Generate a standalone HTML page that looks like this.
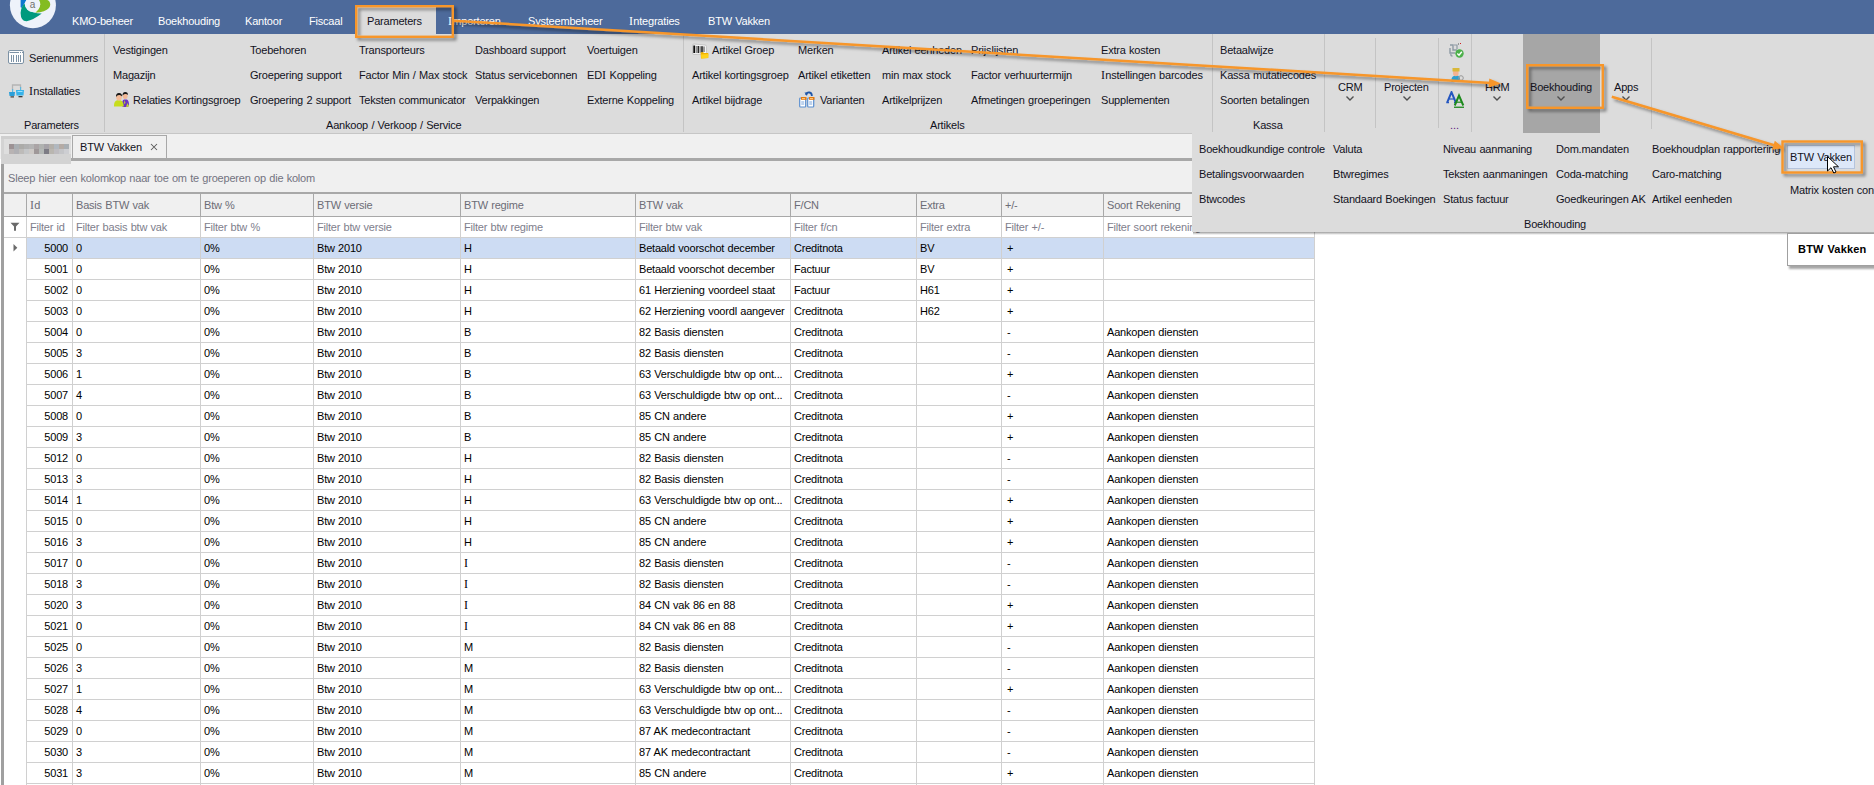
<!DOCTYPE html><html><head><meta charset="utf-8"><style>
*{margin:0;padding:0;box-sizing:border-box}
html,body{width:1874px;height:785px;overflow:hidden;background:#fff;font-family:"Liberation Sans", sans-serif;}
.t{position:absolute;font-size:11px;line-height:13px;white-space:nowrap;color:#12121c;letter-spacing:-0.2px;word-spacing:0.5px}
.w{color:#fff}
.g{color:#6c6c76}
.f{color:#7e7e8c}
.d{color:#000}
.si{font-family:"Liberation Serif",serif;font-size:12px;line-height:0;letter-spacing:0.3px}
</style></head><body><div style="position:absolute;left:0px;top:0px;width:1874px;height:34px;background:#4d6a9b"></div>
<svg style="position:absolute;left:0;top:0" width="60" height="34" viewBox="0 0 60 34">
<circle cx="32.9" cy="5.2" r="23" fill="#eef2fa"/>
<path d="M20.6 -1 L27 -1 L22 7.8 Q20.8 8 20.6 7 Z" fill="#0d78cf"/>
<path d="M24.5 3.5 Q21 7 20.6 13 Q20.8 21.5 26.7 21.2 Q33 20 41.8 13.4 Q33 13.5 28 10 Q24.8 7.5 24.5 3.5 Z" fill="#009a7e"/>
<path d="M36 -2 Q45 -2 49 1 Q51.5 4.5 49 8 Q45.5 12 35.3 12.8 Q39.5 9 39.8 4.5 Q39.5 0.5 36 -2 Z" fill="#83bc21"/>
<circle cx="32.7" cy="4.3" r="7.6" fill="#eef2fa"/>
<text x="29.8" y="8.2" font-family="Liberation Sans" font-size="10" fill="#707070">a</text>
</svg>
<div class="t w" style="left:72px;top:15px;">KMO-beheer</div>
<div class="t w" style="left:158px;top:15px;">Boekhouding</div>
<div class="t w" style="left:245px;top:15px;">Kantoor</div>
<div class="t w" style="left:309px;top:15px;">Fiscaal</div>
<div class="t w" style="left:448px;top:15px;"><span class="si">I</span>mporteren</div>
<div class="t w" style="left:528px;top:15px;">Systeembeheer</div>
<div class="t w" style="left:629px;top:15px;"><span class="si">I</span>ntegraties</div>
<div class="t w" style="left:708px;top:15px;">BTW Vakken</div>
<div style="position:absolute;left:357px;top:7px;width:79px;height:27px;background:#dcdcdc"></div>
<div class="t " style="left:367px;top:15px;">Parameters</div>
<div style="position:absolute;left:0px;top:34px;width:1874px;height:100px;background:#dcdcdc"></div>
<div style="position:absolute;left:0px;top:133px;width:1192px;height:1px;background:#c6c6c6"></div>
<div style="position:absolute;left:104px;top:34px;width:1px;height:98px;background:#c4c4c4"></div>
<div style="position:absolute;left:683px;top:34px;width:1px;height:98px;background:#c4c4c4"></div>
<div style="position:absolute;left:1212px;top:34px;width:1px;height:98px;background:#c4c4c4"></div>
<div style="position:absolute;left:1324px;top:34px;width:1px;height:98px;background:#c4c4c4"></div>
<div style="position:absolute;left:1375px;top:38px;width:1px;height:90px;background:#c4c4c4"></div>
<div style="position:absolute;left:1438px;top:38px;width:1px;height:90px;background:#c4c4c4"></div>
<div style="position:absolute;left:1471px;top:34px;width:1px;height:98px;background:#c4c4c4"></div>
<div style="position:absolute;left:1651px;top:38px;width:1px;height:91px;background:#c4c4c4"></div>
<div class="t " style="left:29px;top:52px;">Serienummers</div>
<div class="t " style="left:29px;top:85px;"><span class="si">I</span>nstallaties</div>
<div class="t " style="left:24px;top:119px;">Parameters</div>
<div class="t " style="left:113px;top:44px;">Vestigingen</div>
<div class="t " style="left:113px;top:69px;">Magazijn</div>
<div class="t " style="left:250px;top:44px;">Toebehoren</div>
<div class="t " style="left:250px;top:69px;">Groepering support</div>
<div class="t " style="left:250px;top:94px;">Groepering 2 support</div>
<div class="t " style="left:359px;top:44px;">Transporteurs</div>
<div class="t " style="left:359px;top:69px;">Factor Min / Max stock</div>
<div class="t " style="left:359px;top:94px;">Teksten communicator</div>
<div class="t " style="left:475px;top:44px;">Dashboard support</div>
<div class="t " style="left:475px;top:69px;">Status servicebonnen</div>
<div class="t " style="left:475px;top:94px;">Verpakkingen</div>
<div class="t " style="left:587px;top:44px;">Voertuigen</div>
<div class="t " style="left:587px;top:69px;">ED<span class="si">I</span> Koppeling</div>
<div class="t " style="left:587px;top:94px;">Externe Koppeling</div>
<div class="t " style="left:692px;top:69px;">Artikel kortingsgroep</div>
<div class="t " style="left:692px;top:94px;">Artikel bijdrage</div>
<div class="t " style="left:798px;top:44px;">Merken</div>
<div class="t " style="left:798px;top:69px;">Artikel etiketten</div>
<div class="t " style="left:882px;top:44px;">Artikel eenheden</div>
<div class="t " style="left:882px;top:69px;">min max stock</div>
<div class="t " style="left:882px;top:94px;">Artikelprijzen</div>
<div class="t " style="left:971px;top:44px;">Prijslijsten</div>
<div class="t " style="left:971px;top:69px;">Factor verhuurtermijn</div>
<div class="t " style="left:971px;top:94px;">Afmetingen groeperingen</div>
<div class="t " style="left:1101px;top:44px;">Extra kosten</div>
<div class="t " style="left:1101px;top:69px;"><span class="si">I</span>nstellingen barcodes</div>
<div class="t " style="left:1101px;top:94px;">Supplementen</div>
<div class="t " style="left:1220px;top:44px;">Betaalwijze</div>
<div class="t " style="left:1220px;top:69px;">Kassa mutatiecodes</div>
<div class="t " style="left:1220px;top:94px;">Soorten betalingen</div>
<div class="t " style="left:133px;top:94px;">Relaties Kortingsgroep</div>
<div class="t " style="left:712px;top:44px;">Artikel Groep</div>
<div class="t " style="left:820px;top:94px;">Varianten</div>
<div class="t " style="left:326px;top:119px;">Aankoop / Verkoop / Service</div>
<div class="t " style="left:930px;top:119px;">Artikels</div>
<div class="t " style="left:1253px;top:119px;">Kassa</div>
<div style="position:absolute;left:1523px;top:34px;width:77px;height:99px;background:#a6a6a6"></div>
<div class="t " style="left:1338px;top:81px;">CRM</div>
<div class="t " style="left:1384px;top:81px;">Projecten</div>
<div class="t " style="left:1485px;top:81px;">HRM</div>
<div class="t " style="left:1530px;top:81px;">Boekhouding</div>
<div class="t " style="left:1614px;top:81px;">Apps</div>
<svg style="position:absolute;left:1345px;top:95px" width="10" height="7"><path d="M1.5 1.5 L5 5 L8.5 1.5" stroke="#505050" stroke-width="1.4" fill="none"/></svg>
<svg style="position:absolute;left:1402px;top:95px" width="10" height="7"><path d="M1.5 1.5 L5 5 L8.5 1.5" stroke="#505050" stroke-width="1.4" fill="none"/></svg>
<svg style="position:absolute;left:1492px;top:95px" width="10" height="7"><path d="M1.5 1.5 L5 5 L8.5 1.5" stroke="#505050" stroke-width="1.4" fill="none"/></svg>
<svg style="position:absolute;left:1556px;top:95px" width="10" height="7"><path d="M1.5 1.5 L5 5 L8.5 1.5" stroke="#505050" stroke-width="1.4" fill="none"/></svg>
<svg style="position:absolute;left:1621px;top:95px" width="10" height="7"><path d="M1.5 1.5 L5 5 L8.5 1.5" stroke="#505050" stroke-width="1.4" fill="none"/></svg>
<svg style="position:absolute;left:8px;top:50px" width="17" height="15" viewBox="0 0 17 15">
<rect x="0.5" y="0.5" width="15" height="13" rx="1.5" fill="#fdfdfd" stroke="#7d92a5"/>
<line x1="1.5" y1="2.5" x2="11" y2="2.5" stroke="#7d92a5" stroke-width="1"/>
<rect x="12" y="2" width="1" height="1" fill="#7d92a5"/><rect x="14" y="2" width="1" height="1" fill="#7d92a5"/>
<rect x="3" y="5" width="1" height="7" fill="#7d92a5"/><rect x="5" y="5" width="1" height="7" fill="#7d92a5"/>
<rect x="8" y="5" width="1" height="7" fill="#7d92a5"/><rect x="10" y="5" width="1" height="7" fill="#7d92a5"/><rect x="12" y="5" width="1" height="7" fill="#7d92a5"/>
</svg>
<svg style="position:absolute;left:9px;top:84px" width="15" height="14" viewBox="0 0 15 14">
<path d="M3.5 6 V1 H11.5 V4" stroke="#b4b4b4" stroke-width="1.3" fill="none"/>
<rect x="11" y="3" width="1.2" height="3" fill="#5ab8e0"/><rect x="3" y="5" width="1.2" height="3" fill="#5ab8e0"/>
<path d="M0 8 H6 L5.5 12 H0.5 Z" fill="#2b9fd9"/>
<path d="M7 6 H15 L14.5 11.5 H7.5 Z" fill="#37b3ea"/>
<rect x="8.5" y="7" width="5" height="1" fill="#9ee0fa"/>
<rect x="1.5" y="12.3" width="3.5" height="1.2" fill="#3a3a3a"/><rect x="9.5" y="12" width="4" height="1.3" fill="#3a3a3a"/>
</svg>
<svg style="position:absolute;left:113px;top:91px" width="17" height="17" viewBox="0 0 17 17">
<path d="M9 15 Q8.5 9.5 11 8.5 L14 8.5 Q16 9.5 16 14 L15 16 L10 16 Z" fill="#6b33c4"/>
<path d="M11.5 9 L12.5 12 L11 13 Z" fill="#c8de24"/><path d="M14.5 12 L16 15.5 L13 16 Z" fill="#c8de24"/>
<path d="M1 15.5 Q0.8 10 4 9.3 L7.5 9.3 Q10.5 10 10.8 15.5 Z" fill="#c7dd1c"/>
<ellipse cx="12.2" cy="5" rx="2.4" ry="3" fill="#f3b996"/>
<path d="M9.5 4.8 Q9.3 1.2 12.2 1 Q15 1 15 4 Q14 2.8 12 3 Q10.5 3 9.5 4.8 Z" fill="#1a1a1a"/>
<ellipse cx="6" cy="6.2" rx="2.8" ry="3.2" fill="#f5bc98"/>
<path d="M3 6 Q2.8 2 6 2 Q9.2 2 9.1 5.5 Q8 3.8 6 4 Q4 4 3 6 Z" fill="#151515"/>
</svg>
<svg style="position:absolute;left:692px;top:43px" width="17" height="16" viewBox="0 0 17 16">
<path d="M0.5 2.5 Q0.5 1 2 1 L13 2 Q14.5 2.2 14.5 3.5 L14.5 9.5 Q14.5 11 13 11 L2 11.5 Q0.5 11.5 0.5 10 Z" fill="#f4f4f4" stroke="#bdbdbd" stroke-width="0.8"/>
<rect x="1.3" y="2.5" width="1.8" height="7.5" fill="#0a0a0a"/><rect x="3.8" y="3" width="0.9" height="7" fill="#666"/>
<rect x="5.5" y="3" width="1.6" height="7" fill="#2a2a2a"/><rect x="7.7" y="3.2" width="0.9" height="6.6" fill="#555"/>
<rect x="9.2" y="3.2" width="1.6" height="6.4" fill="#222"/><rect x="11.5" y="3.5" width="1" height="5.5" fill="#444"/>
<path d="M8.6 9.5 L11 9 L12 10 L16.3 10 L16.3 15 L9 15.5 Z" fill="#f2b200"/>
<path d="M9 11.5 L16.5 11 L16 15 L9.3 15.5 Z" fill="#ffd21c"/>
</svg>
<svg style="position:absolute;left:799px;top:91px" width="17" height="17" viewBox="0 0 17 17">
<path d="M7 4 Q8 1 10.5 1.5 Q13 2 12.8 5" stroke="#1f56a8" stroke-width="1.8" fill="none"/>
<path d="M5.5 1.5 L8.5 1.5 L8 5 Z" fill="#1f56a8"/>
<rect x="0.7" y="7" width="6" height="9" rx="0.8" fill="#fff" stroke="#5a8fd0" stroke-width="1.2"/>
<rect x="8.7" y="7" width="6" height="9" rx="0.8" fill="#fff" stroke="#5a8fd0" stroke-width="1.2"/>
<rect x="2" y="6" width="5.5" height="2.8" fill="#e57a10"/><rect x="10" y="6" width="5.5" height="2.8" fill="#e57a10"/>
<rect x="3" y="7" width="3" height="0.9" fill="#ffd080"/><rect x="11" y="7" width="3" height="0.9" fill="#ffd080"/>
<rect x="2.2" y="10.5" width="3" height="1" fill="#7aa6dc"/><rect x="2.2" y="12.5" width="3" height="1" fill="#7aa6dc"/>
<rect x="10.2" y="10.5" width="3" height="1" fill="#7aa6dc"/><rect x="10.2" y="12.5" width="3" height="1" fill="#7aa6dc"/>
</svg>
<svg style="position:absolute;left:1448px;top:42px" width="17" height="17" viewBox="0 0 17 17">
<path d="M2 3 H5 V8 H9 M2 6 V11 H7 M3 12 Q2.5 14 4.5 14" stroke="#8d9aa4" stroke-width="1.4" fill="none"/>
<path d="M6 3 H9 V7" stroke="#8d9aa4" stroke-width="1.2" fill="none"/>
<rect x="12" y="1" width="1" height="1" fill="#d02020"/><rect x="10" y="1.5" width="1" height="1" fill="#555"/>
<circle cx="11.5" cy="11.5" r="4.2" fill="#4cb04a"/>
<path d="M9.3 11.6 L11 13.2 L13.8 9.8" stroke="#fff" stroke-width="1.4" fill="none"/>
</svg>
<svg style="position:absolute;left:1450px;top:67px" width="15" height="16" viewBox="0 0 15 16">
<path d="M1.5 12 Q2 9 5 8.5 L8 8.5 Q10 9.5 10 12 L10 15 L1.5 15 Z" fill="#2ba0d0"/>
<ellipse cx="5.8" cy="6" rx="2.8" ry="3.2" fill="#f4b391"/>
<path d="M2.5 1 H9.5 V4.5 H2.5 Z" fill="#d9b83a"/>
<circle cx="11" cy="11" r="2.3" fill="none" stroke="#999" stroke-width="1"/>
</svg>
<svg style="position:absolute;left:1446px;top:91px" width="19" height="18" viewBox="0 0 19 18">
<path d="M1.2 11.5 L5.5 1.2 L9.8 11.5" stroke="#2456c0" stroke-width="2" fill="none" stroke-linejoin="miter"/>
<path d="M3.2 8 H7.8" stroke="#2456c0" stroke-width="1.2"/>
<path d="M0.3 11.6 H3 M8 11.6 H10.7" stroke="#2456c0" stroke-width="1.1"/>
<path d="M8.7 14.5 L13 4.6 L17.3 14.5" stroke="#1d8a1d" stroke-width="2" fill="none"/>
<path d="M10.7 11.2 H15.3" stroke="#1d8a1d" stroke-width="1.2"/>
<rect x="8" y="15.6" width="10" height="1.3" fill="#1d8a1d"/>
</svg>
<div class="t " style="left:1450px;top:119px;color:#602080;letter-spacing:0">...</div>
<div style="position:absolute;left:0px;top:134px;width:1874px;height:25px;background:#f0f0f0"></div>
<div style="position:absolute;left:72px;top:135px;width:95px;height:25px;background:#f0f0f0;border:1px solid #a8a8a8;border-bottom:none"></div>
<div class="t " style="left:80px;top:141px;">BTW Vakken</div>
<svg style="position:absolute;left:150px;top:143px" width="8" height="8"><path d="M1 1 L7 7 M7 1 L1 7" stroke="#5a5a5a" stroke-width="1.05"/></svg>
<div style="position:absolute;left:71px;top:158px;width:1803px;height:3px;background:#a8a8a8"></div>
<div style="position:absolute;left:1px;top:159px;width:3px;height:626px;background:#a0a0a0"></div>
<div style="position:absolute;left:4px;top:161px;width:1870px;height:32px;background:#f0f0f0"></div>
<div style="position:absolute;left:4px;top:192px;width:1870px;height:2px;background:#a8a8a8"></div>
<div style="position:absolute;left:1px;top:136px;width:70px;height:28px;background:#d3d3d3"></div>
<div style="position:absolute;left:1px;top:136px;width:70px;height:3px;background:#cfcfcf"></div>
<div style="position:absolute;left:4px;top:139px;width:67px;height:15px;background:#dedede"></div>
<div style="position:absolute;left:9px;top:144px;width:5px;height:5px;background:#9c9294"></div>
<div style="position:absolute;left:9px;top:149px;width:5px;height:5px;background:#b8b3b3"></div>
<div style="position:absolute;left:14px;top:144px;width:5px;height:5px;background:#a9aeb2"></div>
<div style="position:absolute;left:14px;top:149px;width:5px;height:5px;background:#b0b0b4"></div>
<div style="position:absolute;left:19px;top:144px;width:5px;height:5px;background:#acaba8"></div>
<div style="position:absolute;left:19px;top:149px;width:5px;height:5px;background:#bdbbb9"></div>
<div style="position:absolute;left:24px;top:144px;width:5px;height:5px;background:#b0b0b0"></div>
<div style="position:absolute;left:24px;top:149px;width:5px;height:5px;background:#c4c6c8"></div>
<div style="position:absolute;left:29px;top:144px;width:5px;height:5px;background:#b4b4b4"></div>
<div style="position:absolute;left:29px;top:149px;width:5px;height:5px;background:#cdc9c6"></div>
<div style="position:absolute;left:34px;top:144px;width:5px;height:5px;background:#aba5a6"></div>
<div style="position:absolute;left:34px;top:149px;width:5px;height:5px;background:#9f9899"></div>
<div style="position:absolute;left:39px;top:144px;width:5px;height:5px;background:#b0b2b0"></div>
<div style="position:absolute;left:39px;top:149px;width:5px;height:5px;background:#b4b8b6"></div>
<div style="position:absolute;left:44px;top:144px;width:5px;height:5px;background:#a6a3a8"></div>
<div style="position:absolute;left:44px;top:149px;width:5px;height:5px;background:#7d7c85"></div>
<div style="position:absolute;left:49px;top:144px;width:5px;height:5px;background:#b3afa9"></div>
<div style="position:absolute;left:49px;top:149px;width:5px;height:5px;background:#b9b6b0"></div>
<div style="position:absolute;left:54px;top:144px;width:5px;height:5px;background:#b1b8bf"></div>
<div style="position:absolute;left:54px;top:149px;width:5px;height:5px;background:#bebcc0"></div>
<div style="position:absolute;left:59px;top:144px;width:5px;height:5px;background:#b4aba5"></div>
<div style="position:absolute;left:59px;top:149px;width:5px;height:5px;background:#c4c5c8"></div>
<div style="position:absolute;left:64px;top:144px;width:5px;height:5px;background:#a8aeb3"></div>
<div style="position:absolute;left:64px;top:149px;width:5px;height:5px;background:#cdced2"></div>
<div class="t " style="left:8px;top:172px;color:#737380">Sleep hier een kolomkop naar toe om te groeperen op die kolom</div>
<div style="position:absolute;left:4px;top:194px;width:1310px;height:23px;background:#f0f0f0"></div>
<div style="position:absolute;left:4px;top:216px;width:1310px;height:1px;background:#a8a8a8"></div>
<div style="position:absolute;left:4px;top:237px;width:1310px;height:1px;background:#d0d0d0"></div>
<svg style="position:absolute;left:10px;top:222px" width="11" height="10"><path d="M0.5 0.8 H9.5 L6 4.6 V8.8 H4 V4.6 Z" fill="#6a6a6a"/></svg>
<svg style="position:absolute;left:13px;top:243px" width="5" height="10"><path d="M0.5 1 L4.3 4.8 L0.5 8.6 Z" fill="#6a6a6a"/></svg>
<div class="t g" style="left:30px;top:199px;"><span class="si">I</span>d</div>
<div class="t f" style="left:30px;top:221px;">Filter id</div>
<div class="t g" style="left:76px;top:199px;">Basis BTW vak</div>
<div class="t f" style="left:76px;top:221px;">Filter basis btw vak</div>
<div class="t g" style="left:204px;top:199px;">Btw %</div>
<div class="t f" style="left:204px;top:221px;">Filter btw %</div>
<div class="t g" style="left:317px;top:199px;">BTW versie</div>
<div class="t f" style="left:317px;top:221px;">Filter btw versie</div>
<div class="t g" style="left:464px;top:199px;">BTW regime</div>
<div class="t f" style="left:464px;top:221px;">Filter btw regime</div>
<div class="t g" style="left:639px;top:199px;">BTW vak</div>
<div class="t f" style="left:639px;top:221px;">Filter btw vak</div>
<div class="t g" style="left:794px;top:199px;">F/CN</div>
<div class="t f" style="left:794px;top:221px;">Filter f/cn</div>
<div class="t g" style="left:920px;top:199px;">Extra</div>
<div class="t f" style="left:920px;top:221px;">Filter extra</div>
<div class="t g" style="left:1005px;top:199px;">+/-</div>
<div class="t f" style="left:1005px;top:221px;">Filter +/-</div>
<div class="t g" style="left:1107px;top:199px;">Soort Rekening</div>
<div class="t f" style="left:1107px;top:221px;">Filter soort rekening</div>
<div style="position:absolute;left:27px;top:238px;width:1287px;height:20px;background:#cddcf3"></div>
<div style="position:absolute;left:26px;top:258px;width:1288px;height:1px;background:#d0d0d0"></div>
<div class="t d" style="left:26px;width:42px;text-align:right;top:242px">5000</div>
<div class="t d" style="left:76px;top:242px;">0</div>
<div class="t d" style="left:204px;top:242px;">0%</div>
<div class="t d" style="left:317px;top:242px;">Btw 2010</div>
<div class="t d" style="left:464px;top:242px;">H</div>
<div class="t d" style="left:639px;top:242px;">Betaald voorschot december</div>
<div class="t d" style="left:794px;top:242px;">Creditnota</div>
<div class="t d" style="left:920px;top:242px;">BV</div>
<div class="t d" style="left:1007px;top:242px;">+</div>
<div style="position:absolute;left:26px;top:279px;width:1288px;height:1px;background:#d0d0d0"></div>
<div class="t d" style="left:26px;width:42px;text-align:right;top:263px">5001</div>
<div class="t d" style="left:76px;top:263px;">0</div>
<div class="t d" style="left:204px;top:263px;">0%</div>
<div class="t d" style="left:317px;top:263px;">Btw 2010</div>
<div class="t d" style="left:464px;top:263px;">H</div>
<div class="t d" style="left:639px;top:263px;">Betaald voorschot december</div>
<div class="t d" style="left:794px;top:263px;">Factuur</div>
<div class="t d" style="left:920px;top:263px;">BV</div>
<div class="t d" style="left:1007px;top:263px;">+</div>
<div style="position:absolute;left:26px;top:300px;width:1288px;height:1px;background:#d0d0d0"></div>
<div class="t d" style="left:26px;width:42px;text-align:right;top:284px">5002</div>
<div class="t d" style="left:76px;top:284px;">0</div>
<div class="t d" style="left:204px;top:284px;">0%</div>
<div class="t d" style="left:317px;top:284px;">Btw 2010</div>
<div class="t d" style="left:464px;top:284px;">H</div>
<div class="t d" style="left:639px;top:284px;">61 Herziening voordeel staat</div>
<div class="t d" style="left:794px;top:284px;">Factuur</div>
<div class="t d" style="left:920px;top:284px;">H61</div>
<div class="t d" style="left:1007px;top:284px;">+</div>
<div style="position:absolute;left:26px;top:321px;width:1288px;height:1px;background:#d0d0d0"></div>
<div class="t d" style="left:26px;width:42px;text-align:right;top:305px">5003</div>
<div class="t d" style="left:76px;top:305px;">0</div>
<div class="t d" style="left:204px;top:305px;">0%</div>
<div class="t d" style="left:317px;top:305px;">Btw 2010</div>
<div class="t d" style="left:464px;top:305px;">H</div>
<div class="t d" style="left:639px;top:305px;">62 Herziening voordl aangever</div>
<div class="t d" style="left:794px;top:305px;">Creditnota</div>
<div class="t d" style="left:920px;top:305px;">H62</div>
<div class="t d" style="left:1007px;top:305px;">+</div>
<div style="position:absolute;left:26px;top:342px;width:1288px;height:1px;background:#d0d0d0"></div>
<div class="t d" style="left:26px;width:42px;text-align:right;top:326px">5004</div>
<div class="t d" style="left:76px;top:326px;">0</div>
<div class="t d" style="left:204px;top:326px;">0%</div>
<div class="t d" style="left:317px;top:326px;">Btw 2010</div>
<div class="t d" style="left:464px;top:326px;">B</div>
<div class="t d" style="left:639px;top:326px;">82 Basis diensten</div>
<div class="t d" style="left:794px;top:326px;">Creditnota</div>
<div class="t d" style="left:1007px;top:326px;">-</div>
<div class="t d" style="left:1107px;top:326px;">Aankopen diensten</div>
<div style="position:absolute;left:26px;top:363px;width:1288px;height:1px;background:#d0d0d0"></div>
<div class="t d" style="left:26px;width:42px;text-align:right;top:347px">5005</div>
<div class="t d" style="left:76px;top:347px;">3</div>
<div class="t d" style="left:204px;top:347px;">0%</div>
<div class="t d" style="left:317px;top:347px;">Btw 2010</div>
<div class="t d" style="left:464px;top:347px;">B</div>
<div class="t d" style="left:639px;top:347px;">82 Basis diensten</div>
<div class="t d" style="left:794px;top:347px;">Creditnota</div>
<div class="t d" style="left:1007px;top:347px;">-</div>
<div class="t d" style="left:1107px;top:347px;">Aankopen diensten</div>
<div style="position:absolute;left:26px;top:384px;width:1288px;height:1px;background:#d0d0d0"></div>
<div class="t d" style="left:26px;width:42px;text-align:right;top:368px">5006</div>
<div class="t d" style="left:76px;top:368px;">1</div>
<div class="t d" style="left:204px;top:368px;">0%</div>
<div class="t d" style="left:317px;top:368px;">Btw 2010</div>
<div class="t d" style="left:464px;top:368px;">B</div>
<div class="t d" style="left:639px;top:368px;">63 Verschuldigde btw op ont...</div>
<div class="t d" style="left:794px;top:368px;">Creditnota</div>
<div class="t d" style="left:1007px;top:368px;">+</div>
<div class="t d" style="left:1107px;top:368px;">Aankopen diensten</div>
<div style="position:absolute;left:26px;top:405px;width:1288px;height:1px;background:#d0d0d0"></div>
<div class="t d" style="left:26px;width:42px;text-align:right;top:389px">5007</div>
<div class="t d" style="left:76px;top:389px;">4</div>
<div class="t d" style="left:204px;top:389px;">0%</div>
<div class="t d" style="left:317px;top:389px;">Btw 2010</div>
<div class="t d" style="left:464px;top:389px;">B</div>
<div class="t d" style="left:639px;top:389px;">63 Verschuldigde btw op ont...</div>
<div class="t d" style="left:794px;top:389px;">Creditnota</div>
<div class="t d" style="left:1007px;top:389px;">-</div>
<div class="t d" style="left:1107px;top:389px;">Aankopen diensten</div>
<div style="position:absolute;left:26px;top:426px;width:1288px;height:1px;background:#d0d0d0"></div>
<div class="t d" style="left:26px;width:42px;text-align:right;top:410px">5008</div>
<div class="t d" style="left:76px;top:410px;">0</div>
<div class="t d" style="left:204px;top:410px;">0%</div>
<div class="t d" style="left:317px;top:410px;">Btw 2010</div>
<div class="t d" style="left:464px;top:410px;">B</div>
<div class="t d" style="left:639px;top:410px;">85 CN andere</div>
<div class="t d" style="left:794px;top:410px;">Creditnota</div>
<div class="t d" style="left:1007px;top:410px;">+</div>
<div class="t d" style="left:1107px;top:410px;">Aankopen diensten</div>
<div style="position:absolute;left:26px;top:447px;width:1288px;height:1px;background:#d0d0d0"></div>
<div class="t d" style="left:26px;width:42px;text-align:right;top:431px">5009</div>
<div class="t d" style="left:76px;top:431px;">3</div>
<div class="t d" style="left:204px;top:431px;">0%</div>
<div class="t d" style="left:317px;top:431px;">Btw 2010</div>
<div class="t d" style="left:464px;top:431px;">B</div>
<div class="t d" style="left:639px;top:431px;">85 CN andere</div>
<div class="t d" style="left:794px;top:431px;">Creditnota</div>
<div class="t d" style="left:1007px;top:431px;">+</div>
<div class="t d" style="left:1107px;top:431px;">Aankopen diensten</div>
<div style="position:absolute;left:26px;top:468px;width:1288px;height:1px;background:#d0d0d0"></div>
<div class="t d" style="left:26px;width:42px;text-align:right;top:452px">5012</div>
<div class="t d" style="left:76px;top:452px;">0</div>
<div class="t d" style="left:204px;top:452px;">0%</div>
<div class="t d" style="left:317px;top:452px;">Btw 2010</div>
<div class="t d" style="left:464px;top:452px;">H</div>
<div class="t d" style="left:639px;top:452px;">82 Basis diensten</div>
<div class="t d" style="left:794px;top:452px;">Creditnota</div>
<div class="t d" style="left:1007px;top:452px;">-</div>
<div class="t d" style="left:1107px;top:452px;">Aankopen diensten</div>
<div style="position:absolute;left:26px;top:489px;width:1288px;height:1px;background:#d0d0d0"></div>
<div class="t d" style="left:26px;width:42px;text-align:right;top:473px">5013</div>
<div class="t d" style="left:76px;top:473px;">3</div>
<div class="t d" style="left:204px;top:473px;">0%</div>
<div class="t d" style="left:317px;top:473px;">Btw 2010</div>
<div class="t d" style="left:464px;top:473px;">H</div>
<div class="t d" style="left:639px;top:473px;">82 Basis diensten</div>
<div class="t d" style="left:794px;top:473px;">Creditnota</div>
<div class="t d" style="left:1007px;top:473px;">-</div>
<div class="t d" style="left:1107px;top:473px;">Aankopen diensten</div>
<div style="position:absolute;left:26px;top:510px;width:1288px;height:1px;background:#d0d0d0"></div>
<div class="t d" style="left:26px;width:42px;text-align:right;top:494px">5014</div>
<div class="t d" style="left:76px;top:494px;">1</div>
<div class="t d" style="left:204px;top:494px;">0%</div>
<div class="t d" style="left:317px;top:494px;">Btw 2010</div>
<div class="t d" style="left:464px;top:494px;">H</div>
<div class="t d" style="left:639px;top:494px;">63 Verschuldigde btw op ont...</div>
<div class="t d" style="left:794px;top:494px;">Creditnota</div>
<div class="t d" style="left:1007px;top:494px;">+</div>
<div class="t d" style="left:1107px;top:494px;">Aankopen diensten</div>
<div style="position:absolute;left:26px;top:531px;width:1288px;height:1px;background:#d0d0d0"></div>
<div class="t d" style="left:26px;width:42px;text-align:right;top:515px">5015</div>
<div class="t d" style="left:76px;top:515px;">0</div>
<div class="t d" style="left:204px;top:515px;">0%</div>
<div class="t d" style="left:317px;top:515px;">Btw 2010</div>
<div class="t d" style="left:464px;top:515px;">H</div>
<div class="t d" style="left:639px;top:515px;">85 CN andere</div>
<div class="t d" style="left:794px;top:515px;">Creditnota</div>
<div class="t d" style="left:1007px;top:515px;">+</div>
<div class="t d" style="left:1107px;top:515px;">Aankopen diensten</div>
<div style="position:absolute;left:26px;top:552px;width:1288px;height:1px;background:#d0d0d0"></div>
<div class="t d" style="left:26px;width:42px;text-align:right;top:536px">5016</div>
<div class="t d" style="left:76px;top:536px;">3</div>
<div class="t d" style="left:204px;top:536px;">0%</div>
<div class="t d" style="left:317px;top:536px;">Btw 2010</div>
<div class="t d" style="left:464px;top:536px;">H</div>
<div class="t d" style="left:639px;top:536px;">85 CN andere</div>
<div class="t d" style="left:794px;top:536px;">Creditnota</div>
<div class="t d" style="left:1007px;top:536px;">+</div>
<div class="t d" style="left:1107px;top:536px;">Aankopen diensten</div>
<div style="position:absolute;left:26px;top:573px;width:1288px;height:1px;background:#d0d0d0"></div>
<div class="t d" style="left:26px;width:42px;text-align:right;top:557px">5017</div>
<div class="t d" style="left:76px;top:557px;">0</div>
<div class="t d" style="left:204px;top:557px;">0%</div>
<div class="t d" style="left:317px;top:557px;">Btw 2010</div>
<div class="t d" style="left:464px;top:557px;"><span class="si">I</span></div>
<div class="t d" style="left:639px;top:557px;">82 Basis diensten</div>
<div class="t d" style="left:794px;top:557px;">Creditnota</div>
<div class="t d" style="left:1007px;top:557px;">-</div>
<div class="t d" style="left:1107px;top:557px;">Aankopen diensten</div>
<div style="position:absolute;left:26px;top:594px;width:1288px;height:1px;background:#d0d0d0"></div>
<div class="t d" style="left:26px;width:42px;text-align:right;top:578px">5018</div>
<div class="t d" style="left:76px;top:578px;">3</div>
<div class="t d" style="left:204px;top:578px;">0%</div>
<div class="t d" style="left:317px;top:578px;">Btw 2010</div>
<div class="t d" style="left:464px;top:578px;"><span class="si">I</span></div>
<div class="t d" style="left:639px;top:578px;">82 Basis diensten</div>
<div class="t d" style="left:794px;top:578px;">Creditnota</div>
<div class="t d" style="left:1007px;top:578px;">-</div>
<div class="t d" style="left:1107px;top:578px;">Aankopen diensten</div>
<div style="position:absolute;left:26px;top:615px;width:1288px;height:1px;background:#d0d0d0"></div>
<div class="t d" style="left:26px;width:42px;text-align:right;top:599px">5020</div>
<div class="t d" style="left:76px;top:599px;">3</div>
<div class="t d" style="left:204px;top:599px;">0%</div>
<div class="t d" style="left:317px;top:599px;">Btw 2010</div>
<div class="t d" style="left:464px;top:599px;"><span class="si">I</span></div>
<div class="t d" style="left:639px;top:599px;">84 CN vak 86 en 88</div>
<div class="t d" style="left:794px;top:599px;">Creditnota</div>
<div class="t d" style="left:1007px;top:599px;">+</div>
<div class="t d" style="left:1107px;top:599px;">Aankopen diensten</div>
<div style="position:absolute;left:26px;top:636px;width:1288px;height:1px;background:#d0d0d0"></div>
<div class="t d" style="left:26px;width:42px;text-align:right;top:620px">5021</div>
<div class="t d" style="left:76px;top:620px;">0</div>
<div class="t d" style="left:204px;top:620px;">0%</div>
<div class="t d" style="left:317px;top:620px;">Btw 2010</div>
<div class="t d" style="left:464px;top:620px;"><span class="si">I</span></div>
<div class="t d" style="left:639px;top:620px;">84 CN vak 86 en 88</div>
<div class="t d" style="left:794px;top:620px;">Creditnota</div>
<div class="t d" style="left:1007px;top:620px;">+</div>
<div class="t d" style="left:1107px;top:620px;">Aankopen diensten</div>
<div style="position:absolute;left:26px;top:657px;width:1288px;height:1px;background:#d0d0d0"></div>
<div class="t d" style="left:26px;width:42px;text-align:right;top:641px">5025</div>
<div class="t d" style="left:76px;top:641px;">0</div>
<div class="t d" style="left:204px;top:641px;">0%</div>
<div class="t d" style="left:317px;top:641px;">Btw 2010</div>
<div class="t d" style="left:464px;top:641px;">M</div>
<div class="t d" style="left:639px;top:641px;">82 Basis diensten</div>
<div class="t d" style="left:794px;top:641px;">Creditnota</div>
<div class="t d" style="left:1007px;top:641px;">-</div>
<div class="t d" style="left:1107px;top:641px;">Aankopen diensten</div>
<div style="position:absolute;left:26px;top:678px;width:1288px;height:1px;background:#d0d0d0"></div>
<div class="t d" style="left:26px;width:42px;text-align:right;top:662px">5026</div>
<div class="t d" style="left:76px;top:662px;">3</div>
<div class="t d" style="left:204px;top:662px;">0%</div>
<div class="t d" style="left:317px;top:662px;">Btw 2010</div>
<div class="t d" style="left:464px;top:662px;">M</div>
<div class="t d" style="left:639px;top:662px;">82 Basis diensten</div>
<div class="t d" style="left:794px;top:662px;">Creditnota</div>
<div class="t d" style="left:1007px;top:662px;">-</div>
<div class="t d" style="left:1107px;top:662px;">Aankopen diensten</div>
<div style="position:absolute;left:26px;top:699px;width:1288px;height:1px;background:#d0d0d0"></div>
<div class="t d" style="left:26px;width:42px;text-align:right;top:683px">5027</div>
<div class="t d" style="left:76px;top:683px;">1</div>
<div class="t d" style="left:204px;top:683px;">0%</div>
<div class="t d" style="left:317px;top:683px;">Btw 2010</div>
<div class="t d" style="left:464px;top:683px;">M</div>
<div class="t d" style="left:639px;top:683px;">63 Verschuldigde btw op ont...</div>
<div class="t d" style="left:794px;top:683px;">Creditnota</div>
<div class="t d" style="left:1007px;top:683px;">+</div>
<div class="t d" style="left:1107px;top:683px;">Aankopen diensten</div>
<div style="position:absolute;left:26px;top:720px;width:1288px;height:1px;background:#d0d0d0"></div>
<div class="t d" style="left:26px;width:42px;text-align:right;top:704px">5028</div>
<div class="t d" style="left:76px;top:704px;">4</div>
<div class="t d" style="left:204px;top:704px;">0%</div>
<div class="t d" style="left:317px;top:704px;">Btw 2010</div>
<div class="t d" style="left:464px;top:704px;">M</div>
<div class="t d" style="left:639px;top:704px;">63 Verschuldigde btw op ont...</div>
<div class="t d" style="left:794px;top:704px;">Creditnota</div>
<div class="t d" style="left:1007px;top:704px;">-</div>
<div class="t d" style="left:1107px;top:704px;">Aankopen diensten</div>
<div style="position:absolute;left:26px;top:741px;width:1288px;height:1px;background:#d0d0d0"></div>
<div class="t d" style="left:26px;width:42px;text-align:right;top:725px">5029</div>
<div class="t d" style="left:76px;top:725px;">0</div>
<div class="t d" style="left:204px;top:725px;">0%</div>
<div class="t d" style="left:317px;top:725px;">Btw 2010</div>
<div class="t d" style="left:464px;top:725px;">M</div>
<div class="t d" style="left:639px;top:725px;">87 AK medecontractant</div>
<div class="t d" style="left:794px;top:725px;">Creditnota</div>
<div class="t d" style="left:1007px;top:725px;">-</div>
<div class="t d" style="left:1107px;top:725px;">Aankopen diensten</div>
<div style="position:absolute;left:26px;top:762px;width:1288px;height:1px;background:#d0d0d0"></div>
<div class="t d" style="left:26px;width:42px;text-align:right;top:746px">5030</div>
<div class="t d" style="left:76px;top:746px;">3</div>
<div class="t d" style="left:204px;top:746px;">0%</div>
<div class="t d" style="left:317px;top:746px;">Btw 2010</div>
<div class="t d" style="left:464px;top:746px;">M</div>
<div class="t d" style="left:639px;top:746px;">87 AK medecontractant</div>
<div class="t d" style="left:794px;top:746px;">Creditnota</div>
<div class="t d" style="left:1007px;top:746px;">-</div>
<div class="t d" style="left:1107px;top:746px;">Aankopen diensten</div>
<div style="position:absolute;left:26px;top:783px;width:1288px;height:1px;background:#d0d0d0"></div>
<div class="t d" style="left:26px;width:42px;text-align:right;top:767px">5031</div>
<div class="t d" style="left:76px;top:767px;">3</div>
<div class="t d" style="left:204px;top:767px;">0%</div>
<div class="t d" style="left:317px;top:767px;">Btw 2010</div>
<div class="t d" style="left:464px;top:767px;">M</div>
<div class="t d" style="left:639px;top:767px;">85 CN andere</div>
<div class="t d" style="left:794px;top:767px;">Creditnota</div>
<div class="t d" style="left:1007px;top:767px;">+</div>
<div class="t d" style="left:1107px;top:767px;">Aankopen diensten</div>
<div style="position:absolute;left:26px;top:194px;width:1px;height:23px;background:#a8a8a8"></div>
<div style="position:absolute;left:26px;top:217px;width:1px;height:568px;background:#d0d0d0"></div>
<div style="position:absolute;left:72px;top:194px;width:1px;height:23px;background:#a8a8a8"></div>
<div style="position:absolute;left:72px;top:217px;width:1px;height:568px;background:#d0d0d0"></div>
<div style="position:absolute;left:200px;top:194px;width:1px;height:23px;background:#a8a8a8"></div>
<div style="position:absolute;left:200px;top:217px;width:1px;height:568px;background:#d0d0d0"></div>
<div style="position:absolute;left:313px;top:194px;width:1px;height:23px;background:#a8a8a8"></div>
<div style="position:absolute;left:313px;top:217px;width:1px;height:568px;background:#d0d0d0"></div>
<div style="position:absolute;left:460px;top:194px;width:1px;height:23px;background:#a8a8a8"></div>
<div style="position:absolute;left:460px;top:217px;width:1px;height:568px;background:#d0d0d0"></div>
<div style="position:absolute;left:635px;top:194px;width:1px;height:23px;background:#a8a8a8"></div>
<div style="position:absolute;left:635px;top:217px;width:1px;height:568px;background:#d0d0d0"></div>
<div style="position:absolute;left:790px;top:194px;width:1px;height:23px;background:#a8a8a8"></div>
<div style="position:absolute;left:790px;top:217px;width:1px;height:568px;background:#d0d0d0"></div>
<div style="position:absolute;left:916px;top:194px;width:1px;height:23px;background:#a8a8a8"></div>
<div style="position:absolute;left:916px;top:217px;width:1px;height:568px;background:#d0d0d0"></div>
<div style="position:absolute;left:1001px;top:194px;width:1px;height:23px;background:#a8a8a8"></div>
<div style="position:absolute;left:1001px;top:217px;width:1px;height:568px;background:#d0d0d0"></div>
<div style="position:absolute;left:1103px;top:194px;width:1px;height:23px;background:#a8a8a8"></div>
<div style="position:absolute;left:1103px;top:217px;width:1px;height:568px;background:#d0d0d0"></div>
<div style="position:absolute;left:1314px;top:194px;width:1px;height:23px;background:#a8a8a8"></div>
<div style="position:absolute;left:1314px;top:217px;width:1px;height:568px;background:#d0d0d0"></div>
<div style="position:absolute;left:1192px;top:134px;width:682px;height:98px;background:#dcdcdc"></div>
<div style="position:absolute;left:1193px;top:232px;width:681px;height:3px;background:linear-gradient(rgba(0,0,0,.38),rgba(0,0,0,0))"></div>
<div class="t " style="left:1199px;top:143px;">Boekhoudkundige controle</div>
<div class="t " style="left:1199px;top:168px;">Betalingsvoorwaarden</div>
<div class="t " style="left:1199px;top:193px;">Btwcodes</div>
<div class="t " style="left:1333px;top:143px;">Valuta</div>
<div class="t " style="left:1333px;top:168px;">Btwregimes</div>
<div class="t " style="left:1333px;top:193px;">Standaard Boekingen</div>
<div class="t " style="left:1443px;top:143px;">Niveau aanmaning</div>
<div class="t " style="left:1443px;top:168px;">Teksten aanmaningen</div>
<div class="t " style="left:1443px;top:193px;">Status factuur</div>
<div class="t " style="left:1556px;top:143px;">Dom.mandaten</div>
<div class="t " style="left:1556px;top:168px;">Coda-matching</div>
<div class="t " style="left:1556px;top:193px;">Goedkeuringen AK</div>
<div class="t " style="left:1652px;top:143px;">Boekhoudplan rapportering</div>
<div class="t " style="left:1652px;top:168px;">Caro-matching</div>
<div class="t " style="left:1652px;top:193px;">Artikel eenheden</div>
<div class="t " style="left:1524px;top:218px;">Boekhouding</div>
<div class="t " style="left:1790px;top:184px;">Matrix kosten con</div>
<div style="position:absolute;left:1787px;top:233px;width:100px;height:33px;background:#fff;border:1px solid #a0a0a0;box-shadow:2px 3px 2px rgba(0,0,0,.35)"></div>
<div class="t d" style="left:1798px;top:243px;font-weight:bold;letter-spacing:0.2px">BTW Vakken</div>
<div style="position:absolute;left:1787px;top:145px;width:68px;height:24px;background:#dde8f9;border:1px solid #b5c4dc"></div>
<div class="t " style="left:1790px;top:151px;">BTW Vakken</div>
<svg style="position:absolute;left:0;top:0" width="1874" height="785" viewBox="0 0 1874 785">
<defs><filter id="sh" x="-5%" y="-50%" width="110%" height="200%"><feDropShadow dx="2.5" dy="2.5" stdDeviation="1.4" flood-color="#000" flood-opacity="0.45"/></filter></defs>
<g filter="url(#sh)" fill="none" stroke="#f7962a" stroke-width="2.4">
<rect x="356.2" y="6.2" width="96.6" height="30.6"/>
<rect x="1527.2" y="65.2" width="75.6" height="42.6"/>
<rect x="1782.5" y="141.5" width="79.3" height="31"/>
<path d="M453.4 20.7 L1491 82.9" stroke-width="2.5"/>
<path d="M1611.8 96.8 L1775 145.5" stroke-width="2.5"/>
<path d="M1501 83.6 L1489.3 78.5 L1488.7 87.5 Z" fill="#f7962a" stroke="none"/>
<path d="M1784 148.3 L1774.8 140.8 L1772.2 149.5 Z" fill="#f7962a" stroke="none"/>
</g>
<path d="M1827.5 156.5 L1827.5 171 L1831 167.7 L1833.8 173 L1836 172 L1833.5 166.8 L1838.5 166.8 Z" fill="#fff" stroke="#000" stroke-width="1"/>
</svg></body></html>
